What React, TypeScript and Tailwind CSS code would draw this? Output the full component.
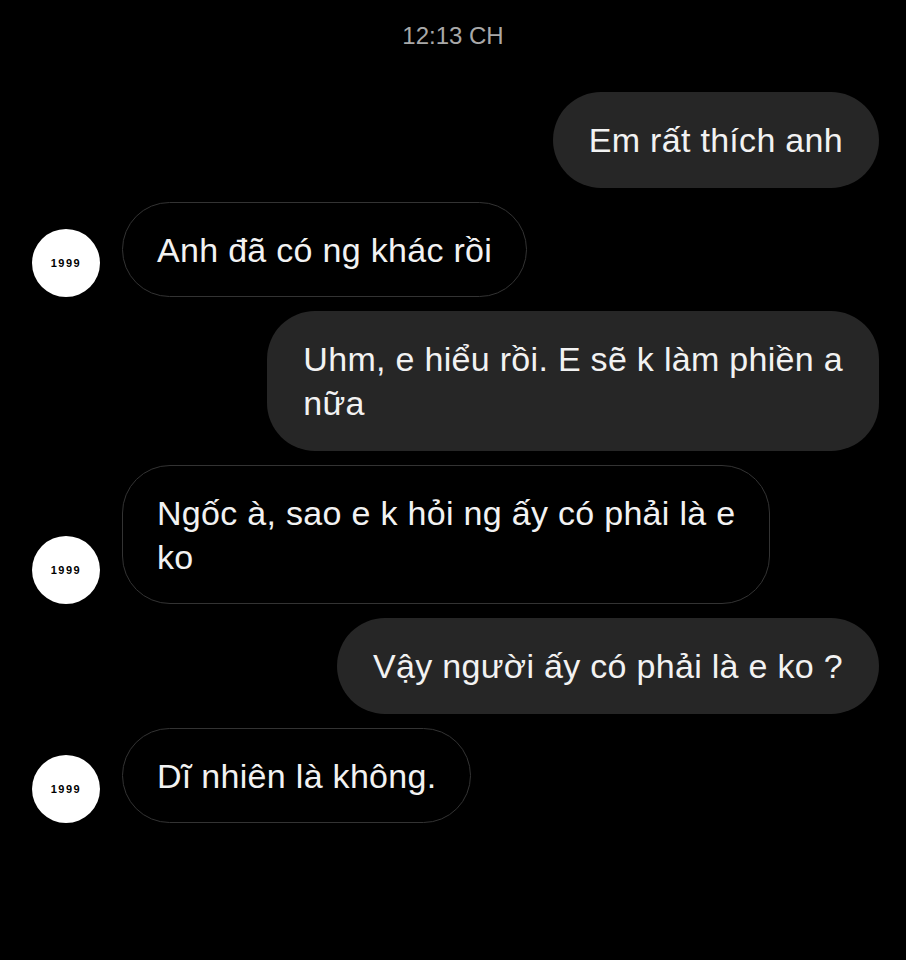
import React from "react";

const font = { fontFamily: "'Liberation Sans', Arial, 'Noto Sans', sans-serif" };

function Avatar() {
  return (
    <div className="w-[68px] h-[68px] rounded-full bg-white flex items-center justify-center shrink-0">
      <span className="text-[11px] font-bold text-black tracking-[1.5px]" style={font}>1999</span>
    </div>
  );
}

function Mine({ children }: { children: React.ReactNode }) {
  return (
    <div className="flex justify-end pr-[27px]">
      <div className="bg-[#262626] rounded-[48px] px-[36px] py-[26px] text-[34px] leading-[44px] tracking-[0.3px] text-[#f2f2f2]" style={font}>
        {children}
      </div>
    </div>
  );
}

function Theirs({ children }: { children: React.ReactNode }) {
  return (
    <div className="flex items-end pl-[32px] gap-[22px]">
      <Avatar />
      <div className="border-[1.5px] border-[#333333] rounded-[48px] px-[34px] py-[24.5px] text-[34px] leading-[44px] tracking-[0.3px] text-[#f2f2f2]" style={font}>
        {children}
      </div>
    </div>
  );
}

export default function App() {
  return (
    <div className="w-[906px] h-[960px] bg-black overflow-hidden">
      <div className="pt-[21px] text-center text-[24px] leading-[30px] text-[#a9a9a9]" style={font}>12:13 CH</div>
      <div className="mt-[41px] flex flex-col gap-[14px]">
        <Mine>Em rất thích anh</Mine>
        <Theirs>Anh đã có ng khác rồi</Theirs>
        <Mine>
          Uhm, e hiểu rồi. E sẽ k làm phiền a<br />nữa
        </Mine>
        <Theirs>
          Ngốc à, sao e k hỏi ng ấy có phải là e<br />ko
        </Theirs>
        <Mine>Vậy người ấy có phải là e ko ?</Mine>
        <Theirs>Dĩ nhiên là không.</Theirs>
      </div>
    </div>
  );
}
